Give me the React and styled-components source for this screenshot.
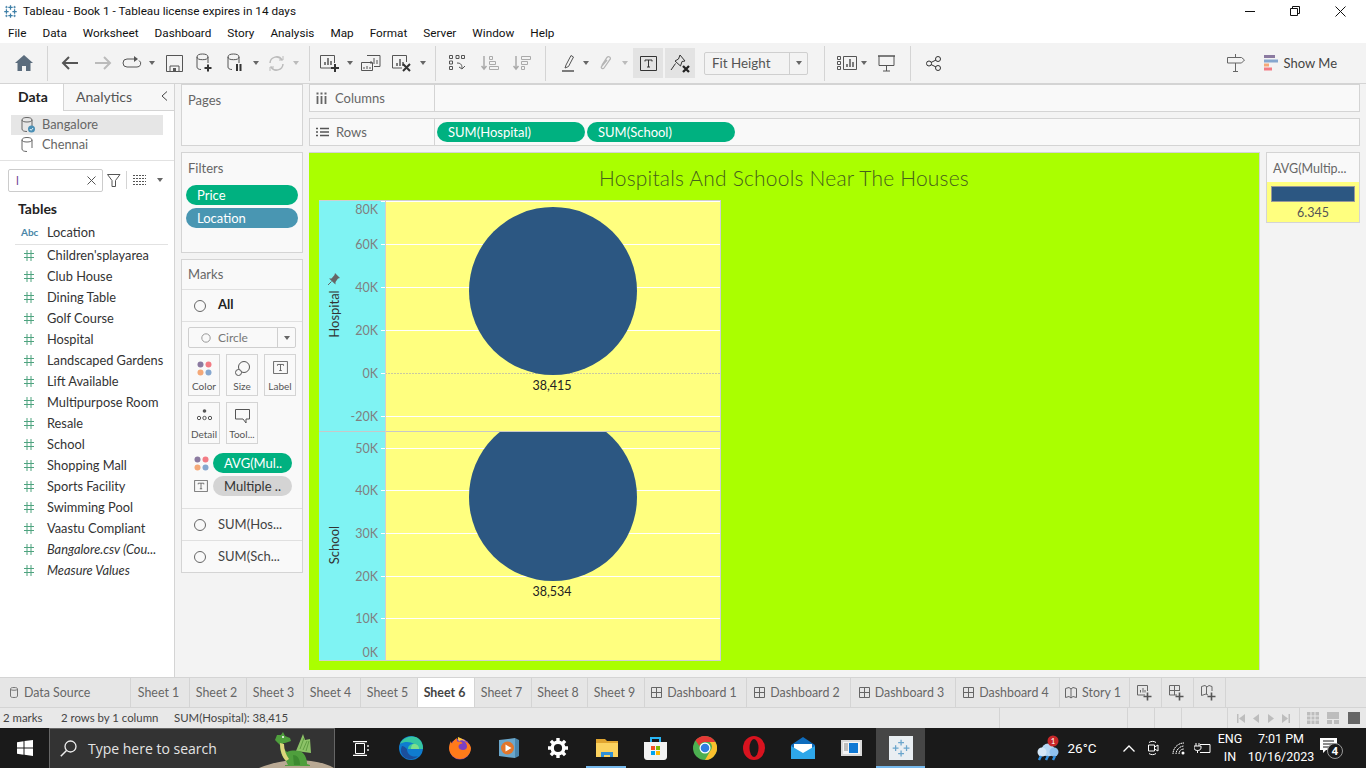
import React from 'react';
import styled, { createGlobalStyle } from 'styled-components';

const UI = 'Roboto, "Open Sans", sans-serif';
const BOOK = 'Lato, "Open Sans", sans-serif';

const GlobalStyle = createGlobalStyle`
  html, body { margin: 0; padding: 0; width: 1366px; height: 768px; overflow: hidden; }
  * { box-sizing: border-box; }
  #root { width: 1366px; height: 768px; }
`;

const Page = styled.div`
  width: 1366px;
  height: 768px;
  display: flex;
  flex-direction: column;
  background: #f3f3f3;
  font-family: ${BOOK};
  color: #333;
`;

/* window chrome */
const TitleBar = styled.div`
  height: 22px;
  background: #fff;
  display: flex;
  align-items: center;
  padding-left: 3px;
  font: 11.75px ${UI};
  color: #111;
`;
const TitleText = styled.span`
  margin-left: 5px;
  flex: 1;
`;
const WinButtons = styled.div`
  display: flex;
  align-items: center;
  height: 22px;
  padding-right: 20px;
  gap: 35px;
`;
const MenuBar = styled.div`
  height: 21px;
  background: #fff;
  display: flex;
  align-items: center;
  padding-left: 8px;
  gap: 16px;
  font: 11.75px ${UI};
  color: #111;
`;
const Toolbar = styled.div`
  height: 41px;
  background: #f3f3f3;
  border-bottom: 1px solid #d4d4d4;
  display: flex;
  align-items: center;
  padding-left: 8px;
`;
const Tool = styled.div`
  width: ${p => p.$w}px;
  margin-left: ${p => p.$ml || 0}px;
  height: 30px;
  flex: none;
  display: flex;
  align-items: center;
  justify-content: center;
  background: ${p => (p.$on ? '#e3e3e3' : 'transparent')};
`;
const ToolDivider = styled.div`
  width: 14px;
  margin-left: ${p => p.$ml || 0}px;
  height: 35px;
  flex: none;
  display: flex;
  justify-content: center;
  &::before { content: ''; width: 1px; background: #d4d4d4; }
`;
const CaretMark = styled.span`
  width: 0;
  height: 0;
  flex: none;
  border-left: 3.5px solid transparent;
  border-right: 3.5px solid transparent;
  border-top: 4px solid ${p => p.$c || '#666'};
`;
const FitSelect = styled.div`
  width: 104px;
  height: 23px;
  margin-left: 9px;
  flex: none;
  border: 1px solid #cfcfcf;
  border-radius: 2px;
  display: flex;
  align-items: center;
  font: 13.4px ${BOOK};
  color: #555;
  padding-left: 7px;
`;
const FitLabel = styled.span`flex: 1; padding-bottom: 1px;`;
const FitArrow = styled.div`
  width: 18px;
  height: 100%;
  border-left: 1px solid #cfcfcf;
  display: flex;
  align-items: center;
  justify-content: center;
`;
const ShowMe = styled.div`
  margin-left: auto;
  margin-right: 29px;
  display: flex;
  align-items: center;
  font: 13px ${BOOK};
  color: #444;
  gap: 6px;
`;
const SignSlot = styled.div`
  margin-right: 13px;
  display: flex;
`;

/* main body */
const Body = styled.div`
  height: 593px;
  display: flex;
`;
const DataPane = styled.div`
  width: 175px;
  flex: none;
  background: #fff;
  border-right: 1px solid #d4d4d4;
  display: flex;
  flex-direction: column;
`;
const PaneTabs = styled.div`
  height: 27px;
  display: flex;
  flex: none;
`;
const PaneTab = styled.div`
  width: ${p => p.$w}px;
  flex: ${p => (p.$grow ? 1 : 'none')};
  display: flex;
  align-items: center;
  font: ${p => (p.$on ? 700 : 400)} 14px ${BOOK};
  color: ${p => (p.$on ? '#222' : '#555')};
  padding: 0 0 2px ${p => p.$pl}px;
  background: ${p => (p.$on ? '#fff' : '#f7f7f7')};
  border-bottom: ${p => (p.$on ? 'none' : '1px solid #d4d4d4')};
  border-right: ${p => (p.$on ? '1px solid #d4d4d4' : 'none')};
`;
const CollapseArrow = styled.span`
  margin-left: auto;
  margin-right: 6px;
  display: flex;
`;
const Sources = styled.div`
  padding: 4px 11px 6px;
  border-bottom: 1px solid #e2e2e2;
  height: 50px;
  flex: none;
`;
const SourceRow = styled.div`
  height: 20px;
  width: 152px;
  display: flex;
  align-items: center;
  gap: 7px;
  padding-left: 10px;
  font: 12.8px ${BOOK};
  color: #666;
  background: ${p => (p.$on ? '#e6e6e6' : 'transparent')};
`;
const SourceName = styled.span`
  margin-top: -3px;
`;
const SearchRow = styled.div`
  display: flex;
  align-items: center;
  margin-top: 8px;
  padding-left: 8px;
  height: 22px;
  flex: none;
`;
const SearchBox = styled.div`
  width: 95px;
  height: 23px;
  flex: none;
  background: #fff;
  border: 1px solid #ccc;
  border-radius: 2px;
  display: flex;
  align-items: center;
  justify-content: space-between;
  padding: 0 6px 0 7px;
  font: 12px ${BOOK};
  color: #72459a;
`;
const FunnelSlot = styled.span`
  display: flex;
  flex: none;
  margin-left: 4px;
`;
const SearchDivider = styled.span`
  width: 1px;
  height: 18px;
  flex: none;
  background: #d4d4d4;
  margin: 0 6px 0 5px;
`;
const ListSlot = styled.span`
  display: flex;
  flex: none;
  margin-right: 11px;
`;
const TablesHead = styled.div`
  margin: 9px 0 0 18px;
  height: 18px;
  line-height: 18px;
  font: 700 14px ${BOOK};
  color: #222;
`;
const FieldRow = styled.div`
  height: 21px;
  margin-top: ${p => p.$mt || 0}px;
  flex: none;
  display: flex;
  align-items: center;
  font: ${p => (p.$italic ? 'italic' : 'normal')} 12.8px ${BOOK};
  color: #333;
  padding: 0 4px 1px 0;
  white-space: nowrap;
`;
const FieldGlyph = styled.span`
  width: 47px;
  padding-left: ${p => p.$pl}px;
  flex: none;
  display: flex;
  font: 700 10px ${BOOK};
  color: #4a86a8;
`;
const FieldDivider = styled.div`
  height: 1px;
  background: #e2e2e2;
  margin: 1px 6px 0 15px;
`;

const SideColumn = styled.div`
  width: 134px;
  flex: none;
  padding-left: 6px;
  display: flex;
  flex-direction: column;
  gap: 6px;
`;
const Card = styled.div`
  width: 122px;
  height: ${p => p.$h}px;
  flex: none;
  background: #f9f9f9;
  border: 1px solid #d4d4d4;
  display: flex;
  flex-direction: column;
`;
const CardTitle = styled.div`
  font: 13px ${BOOK};
  color: #666;
  padding: ${p => p.$pt || 7}px 0 0 6px;
  height: ${p => p.$h || 25}px;
  flex: none;
`;
const Pill = styled.div`
  height: 20px;
  width: ${p => p.$w}px;
  flex: none;
  border-radius: 10px;
  background: ${p => p.$bg || '#00b180'};
  color: ${p => p.$fg || '#fff'};
  font: 13px ${BOOK};
  display: flex;
  align-items: center;
  padding: 0 0 1px 11px;
  white-space: nowrap;
`;
const PillStack = styled.div`
  display: flex;
  flex-direction: column;
  gap: 3px;
  margin: 1px 0 0 4px;
`;
const MarkRow = styled.div`
  height: ${p => p.$h}px;
  flex: none;
  display: flex;
  align-items: center;
  gap: 12px;
  padding-left: 12px;
  font: ${p => (p.$bold ? 700 : 400)} 13px ${BOOK};
  color: ${p => (p.$bold ? '#222' : '#444')};
  border-top: 1px solid #e0e0e0;
`;
const MarkLabel = styled.span`
  margin-top: -${p => p.$up || 2}px;
`;
const Radio = styled.span`
  width: 12px;
  height: 12px;
  border-radius: 50%;
  border: 1.5px solid #666;
  flex: none;
`;
const MarkControls = styled.div`
  flex: none;
  border-top: 1px solid #e0e0e0;
  padding: 5px 6px 0;
  height: 187px;
`;
const MarkSelect = styled.div`
  width: 108px;
  height: 21px;
  border: 1px solid #cfcfcf;
  border-radius: 2px;
  display: flex;
  align-items: center;
  font: 12px ${BOOK};
  color: #777;
  padding-left: 12px;
  gap: 7px;
`;
const MarkArrow = styled.div`
  margin-left: auto;
  width: 18px;
  height: 100%;
  border-left: 1px solid #cfcfcf;
  display: flex;
  align-items: center;
  justify-content: center;
`;
const MarkGrid = styled.div`
  display: grid;
  grid-template-columns: repeat(3, 32px);
  grid-auto-rows: 42px;
  gap: 6px;
  margin-top: 6px;
`;
const MarkButton = styled.div`
  border: 1px solid #d4d4d4;
  display: flex;
  flex-direction: column;
  align-items: center;
  justify-content: space-between;
  font: 10px ${BOOK};
  color: #555;
  padding: 6px 0 3px;
  overflow: hidden;
  white-space: nowrap;
`;
const EncodingRows = styled.div`
  display: flex;
  flex-direction: column;
  gap: 3px;
  margin-top: 9px;
`;
const EncodingRow = styled.div`
  display: flex;
  align-items: center;
`;
const EncodingIcon = styled.span`
  width: 25px;
  padding-left: 6px;
  flex: none;
  display: flex;
`;

const Main = styled.div`
  width: 1051px;
  flex: none;
  display: flex;
  flex-direction: column;
  gap: 6px;
`;
const Shelf = styled.div`
  height: 28px;
  flex: none;
  background: #f9f9f9;
  border: 1px solid #d4d4d4;
  display: flex;
  align-items: center;
`;
const ShelfLabel = styled.div`
  width: 125px;
  height: 100%;
  flex: none;
  border-right: 1px solid #d4d4d4;
  display: flex;
  align-items: center;
  gap: ${p => p.$gap}px;
  padding: 0 0 1px 6px;
  font: 13px ${BOOK};
  color: #666;
`;
const ShelfPills = styled.div`
  display: flex;
  gap: 2px;
  padding-left: 2px;
`;
const VizRow = styled.div`
  display: flex;
  gap: 6px;
  align-items: flex-start;
`;
const Viz = styled.div`
  width: 951px;
  height: 518px;
  background: #aaff00;
  border-top: 1px solid #d4d4d4;
  border-right: 1px solid #d4d4d4;
  padding-left: 10px;
`;
const VizTitle = styled.div`
  height: 47px;
  font: 300 21px ${BOOK};
  letter-spacing: 0.2px;
  color: #46601c;
  display: flex;
  align-items: center;
  justify-content: center;
  padding: 1px 0 0 0;
  margin-left: -10px;
`;
const Legend = styled.div`
  width: 94px;
  height: 71px;
  flex: none;
  background: #f9f9f9;
  border: 1px solid #d4d4d4;
  display: flex;
  flex-direction: column;
`;
const LegendTitle = styled.div`
  height: 29px;
  flex: none;
  font: 12.5px ${BOOK};
  color: #666;
  padding: 2px 0 0 6px;
  display: flex;
  align-items: center;
`;
const LegendBody = styled.div`
  flex: 1;
  background: #ffff7f;
  padding: 4px 4px 0;
  display: flex;
  flex-direction: column;
  align-items: center;
  font: 12.5px ${BOOK};
  color: #555;
`;
const LegendSwatch = styled.div`
  width: 100%;
  height: 16px;
  flex: none;
  background: #2c5782;
  border: 1px solid #999;
  margin-bottom: 3px;
`;

/* sheet tabs and status */
const TabBar = styled.div`
  height: 31px;
  flex: none;
  background: #e6e6e6;
  border-top: 1px solid #d4d4d4;
  border-bottom: 1px solid #d4d4d4;
  display: flex;
`;
const SheetTab = styled.div`
  width: ${p => p.$w}px;
  flex: none;
  display: flex;
  align-items: center;
  justify-content: ${p => (p.$start ? 'flex-start' : 'center')};
  gap: ${p => (p.$start ? 6 : 5)}px;
  padding: 0 ${p => (p.$start ? 0 : 3)}px 0 ${p => (p.$start ? 10 : 0)}px;
  font: ${p => (p.$on ? 700 : 400)} 12.4px ${BOOK};
  color: ${p => (p.$on ? '#444' : '#666')};
  background: ${p => (p.$on ? '#fff' : 'transparent')};
  border-right: 1px solid #d4d4d4;
`;
const StatusBar = styled.div`
  height: 20px;
  flex: none;
  background: #e8e8e8;
  display: flex;
  align-items: center;
  font: 11.4px ${BOOK};
  color: #444;
`;
const StatusText = styled.span`
  width: ${p => p.$w}px;
  flex: none;
  padding: 0 0 1px 3px;
  white-space: nowrap;
`;
const StatusCell = styled.div`
  width: ${p => p.$w}px;
  height: 100%;
  flex: none;
  border-left: 1px solid #d4d4d4;
  display: flex;
  align-items: center;
  justify-content: space-around;
  padding: 0 ${p => p.$pad || 0}px;
`;

/* windows taskbar */
const Taskbar = styled.div`
  height: 40px;
  flex: none;
  background: #1a1a1a;
  display: flex;
  align-items: stretch;
  color: #fff;
  font: 12.5px ${UI};
`;
const StartSlot = styled.div`
  width: 49px;
  flex: none;
  display: flex;
  align-items: center;
  justify-content: center;
`;
const SearchBar = styled.div`
  width: 286px;
  flex: none;
  background: #333;
  border: 1px solid #666;
  border-bottom: none;
  display: flex;
  align-items: center;
  font: 14px "Open Sans", sans-serif;
  color: #e4e4e4;
  padding-left: 10px;
  gap: 11px;
  overflow: hidden;
`;
const DragonWrap = styled.span`
  margin-left: auto;
  height: 39px;
  display: flex;
`;
const AppSlot = styled.div`
  position: relative;
  width: ${p => p.$w}px;
  flex: none;
  display: flex;
  align-items: center;
  justify-content: center;
  background: ${p => (p.$active ? '#464646' : 'transparent')};
  &::after {
    content: '';
    display: ${p => (p.$open || p.$active ? 'block' : 'none')};
    position: absolute;
    bottom: 0;
    height: 2px;
    left: ${p => (p.$active ? 0 : 4)}px;
    right: ${p => (p.$active ? 0 : 5)}px;
    background: #76b9ed;
  }
`;
const Tray = styled.div`
  margin-left: auto;
  display: flex;
  align-items: center;
  padding-right: 21px;
`;
const TrayItem = styled.div`
  width: ${p => p.$w}px;
  margin-left: ${p => p.$ml || 0}px;
  flex: none;
  display: flex;
  align-items: center;
  justify-content: center;
  font-size: ${p => p.$fs || 12}px;
`;
const TrayStack = styled.div`
  width: ${p => p.$w}px;
  margin-left: ${p => p.$ml || 0}px;
  flex: none;
  display: flex;
  flex-direction: column;
  align-items: center;
  line-height: 18px;
  white-space: nowrap;
`;

/* icons */
const Ico = ({ w = 20, h = 20, box, children, ...rest }) => (
  <svg width={w} height={h} viewBox={box || `0 0 ${w} ${h}`} fill="none" {...rest}>{children}</svg>
);
const D = '#555';
const G = '#bbb';

const TableauMark = ({ size = 15, c = '#3d7ea6' }) => (
  <Ico w={size} h={size} box="0 0 24 24">
    <g stroke={c} strokeWidth="2">
      <path d="M12 2v7M8.500 5.500h7M12 15v7M8.500 18.500h7M5.500 8.500v7M2 12h7M18.500 8.500v7M15 12h7" />
      <path d="M5.500 3v4M3.500 5h4M18.500 3v4M16.500 5h4M5.500 17v4M3.500 19h4M18.500 17v4M16.500 19h4" strokeWidth="1.300" />
    </g>
  </Ico>
);
const Minimize = () => <Ico w={10} h={10}><path d="M0 5.500h10" stroke="#111" /></Ico>;
const Restore = () => <Ico w={10} h={10}><path d="M.5 2.500h7v7h-7zM2.500 2.500v-2h7v7h-2" stroke="#111" /></Ico>;
const CloseX = () => <Ico w={11} h={11}><path d="M.5.5l10 10M10.500.5l-10 10" stroke="#111" /></Ico>;

const HomeIcon = () => <Ico w={18} h={16}><path d="M9 0L0 8h2.500v8h4.500v-5h4v5h4.500V8H18z" fill="#5b6c7d" /></Ico>;
const ArrowBack = ({ c = D }) => <Ico w={18} h={14}><path d="M17 7H2M8 1L2 7l6 6" stroke={c} strokeWidth="2" /></Ico>;
const ArrowFwd = ({ c = G }) => <Ico w={18} h={14}><path d="M1 7h15M10 1l6 6-6 6" stroke={c} strokeWidth="2" /></Ico>;
const RedoLoop = () => <Ico w={20} h={14}><path d="M13 3H5a3.500 3.500 0 000 8h10a3.500 3.500 0 002-6.500" stroke={D} /><path d="M12 0l4 3-4 3z" fill={D} /></Ico>;
const SaveIcon = () => <Ico w={17} h={17}><path d="M.5.5h16v16H.5z" stroke={D} /><path d="M4 16v-5h9v5" stroke={D} /><path d="M7 13h3v3H7z" fill={D} /></Ico>;
const Cyl = ({ extra }) => (
  <Ico w={20} h={20}>
    <path d="M2 4c0-2 2-3 5.500-3S13 2 13 4v6M2 4v10c0 1.500 1.500 2.500 4 2.500M2 4c0 1.800 2 2.700 5.500 2.700S13 5.800 13 4" stroke={D} />
    {extra}
  </Ico>
);
const PlusMark = ({ x = 13, y = 14, s = 3.500, c = '#333', w = 2 }) => (
  <path d={`M${x - s} ${y}h${2 * s}M${x} ${y - s}v${2 * s}`} stroke={c} strokeWidth={w} />
);
const SheetBars = ({ c = D }) => (
  <path d="M5 12V9M8 12V5M11 12V8" stroke={c} strokeWidth="1.500" />
);
const NewSheet = () => (
  <Ico w={21} h={20}><path d="M12 15H.5V2.500h14V10" stroke={D} /><SheetBars /><PlusMark x={15} y={15} s={4} /></Ico>
);
const DupSheet = () => (
  <Ico w={20} h={17}>
    <path d="M6 .5h13v11h-6M.5 7.500h11v8H.5z" stroke={D} fill="#f3f3f3" />
    <path d="M10 9V6M13 9V3M16 9V5" stroke={D} />
    <path d="M3 14v-2M6 14v-3M9 14v-2" stroke={D} />
  </Ico>
);
const ClearSheet = () => (
  <Ico w={20} h={19}><path d="M10 14H.5V1.500h14V8" stroke={D} /><SheetBars /><path d="M11 10l7 7M18 10l-7 7" stroke="#333" strokeWidth="2" /></Ico>
);
const SwapIcon = () => (
  <Ico w={20} h={18}>
    <g stroke={D}><path d="M1.500 1.500h3v3h-3zM1.500 7h3v3h-3zM1.500 12.500h3v3h-3zM8 1.500h3v3H8zM13.500 1.500h3v3h-3z" /></g>
    <path d="M9 9c3 0 5 1 5 5M11 13l3 2 3-3" stroke={D} />
  </Ico>
);
const SortAsc = () => (
  <Ico w={18} h={16}>
    <path d="M3 1v13M.5 11L3 14l2.500-3" stroke="#aaa" strokeWidth="1.500" />
    <path d="M8.500 1.500h3v3h-3zM8.500 6.500h6v3h-6zM8.500 11.500h9v3h-9z" stroke="#aaa" />
  </Ico>
);
const SortDesc = () => (
  <Ico w={18} h={16}>
    <path d="M3 1v13M.5 11L3 14l2.500-3" stroke="#aaa" strokeWidth="1.500" />
    <path d="M8.500 1.500h9v3h-9zM8.500 6.500h6v3h-6zM8.500 11.500h3v3h-3z" stroke="#aaa" />
  </Ico>
);
const Marker = () => (
  <Ico w={13} h={18}>
    <path d="M4 11L9 1.500l2.500 1.500L6.500 12.500 3 14z" stroke={D} fill="none" />
    <path d="M0 17h12" stroke={D} strokeWidth="1.500" />
  </Ico>
);
const Clip = () => (
  <Ico w={13} h={16}>
    <path d="M3 10l5-7.500c1.500-2 4.500 0 3 2L5 13c-1 1.500-3.500 0-2.500-1.500L8 5" stroke="#b5b5b5" strokeWidth="1.300" fill="none" />
  </Ico>
);
const BoxT = ({ w = 17, h = 15, c = '#333' }) => (
  <Ico w={w} h={h} box="0 0 17 15"><path d="M.5.5h16v14H.5z" stroke={c} /><path d="M5 4h7M8.500 4v7M7 11h3M5 4v1.500M12 4v1.500" stroke={c} /></Ico>
);
const PinClear = () => (
  <Ico w={22} h={22}>
    <path d="M11 3l5 6-3 .5-1.500 4.500-5.500-5 3.500-2zM6.500 11.500L2 18" stroke="#333" fill="none" />
    <path d="M14 14l6 6M20 14l-6 6" stroke="#222" strokeWidth="2.300" />
  </Ico>
);
const ShowHide = () => (
  <Ico w={20} h={15}>
    <path d="M.5.500h3v3h-3zM.5 5.500h3v3h-3zM.5 10.500h3v3h-3zM6.500.5h13v13h-13z" stroke={D} />
    <path d="M10 11V8M13 11V3M16 11V6" stroke={D} strokeWidth="1.500" />
  </Ico>
);
const Present = () => (
  <Ico w={17} h={17}>
    <path d="M0 1h17" stroke={D} strokeWidth="1.500" /><path d="M1 1v9.500h15V1M8.500 10.500V16M5 16h7" stroke={D} />
  </Ico>
);
const Share = () => (
  <Ico w={15} h={15}>
    <circle cx="12" cy="3" r="2.500" stroke="#333" /><circle cx="12" cy="12" r="2.500" stroke="#333" /><circle cx="3" cy="7.500" r="2.500" stroke="#333" />
    <path d="M5 6.500l5-2.500M5 8.500l5 2.500" stroke="#333" />
  </Ico>
);
const SignPost = () => (
  <Ico w={18} h={18}>
    <path d="M.5 3.500h14L17.500 6l-3 3H.5zM8.500 0v3.500M8.500 9v8M6 17.500h5" stroke="#666" />
  </Ico>
);
const ShowMeBars = () => (
  <Ico w={14} h={16}>
    <path d="M0 0h11v3H0z" fill="#8b7aa0" /><path d="M0 4.500h14v3H0z" fill="#86a7cf" />
    <path d="M0 8.500h5v3H0z" fill="#f4a878" /><path d="M0 12.500h8v3H0z" fill="#f37b84" />
  </Ico>
);

const DbIcon = ({ check, c = '#666' }) => (
  <Ico w={14} h={16}>
    <path d="M1 3c0-1.500 1.700-2.500 5-2.500S11 1.500 11 3v8M1 3v9c0 1.500 1.700 2.500 5 2.500M1 3c0 1.300 2 2 5 2s5-.7 5-2" stroke={c} />
    {check && <circle cx="10.500" cy="12" r="3.500" fill="#4a8fb5" />}
    {check && <path d="M8.800 12l1.300 1.300 2-2.300" stroke="#fff" strokeWidth=".9" />}
  </Ico>
);
const TabDb = () => (
  <Ico w={8} h={11}><path d="M.5 2C.5 1 1.500.5 4 .5S7.500 1 7.500 2v7c0 1-1 1.500-3.500 1.500S.5 10 .5 9zM.5 2.500c1 1 6 1 7 0" stroke="#777" /></Ico>
);
const Chevron = () => <Ico w={7} h={10}><path d="M6 .5L1 5l5 4.500" stroke="#444" /></Ico>;
const SmallX = () => <Ico w={9} h={9}><path d="M.5.5l8 8M8.500.5l-8 8" stroke="#555" /></Ico>;
const Funnel = () => <Ico w={14} h={13}><path d="M.5.500h12.500L8.500 6.500v6L5 12.500v-6z" stroke="#555" /></Ico>;
const ListView = () => <Ico w={13} h={10}><path d="M0 .5h13M0 3.500h13M0 6.500h13M0 9.500h13" stroke="#555" strokeDasharray="2 1" /></Ico>;
const Hash = () => <Ico w={10} h={11}><path d="M3 0v11M7 0v11M0 3.500h10M0 7.500h10" stroke="#4ea37f" /></Ico>;
const ColumnsMark = () => <Ico w={11} h={12}><path d="M1.500 4v8M5.500 4v8M9.500 4v8" stroke="#666" strokeWidth="1.800" /><path d="M.5 1.500h2M4.500 1.500h2M8.500 1.500h2" stroke="#666" strokeWidth="1.800" /></Ico>;
const RowsMark = () => <Ico w={13} h={10}><path d="M4 1.500h9M4 5h9M4 8.500h9M0 1.500h2M0 5h2M0 8.500h2" stroke="#555" strokeWidth="1.500" /></Ico>;
const FourDots = ({ s = 15 }) => (
  <Ico w={s} h={s} box="0 0 15 15">
    <circle cx="3.500" cy="3.500" r="3" fill="#8b7aa0" /><circle cx="11.500" cy="3.500" r="3" fill="#f37b84" />
    <circle cx="3.500" cy="11.500" r="3" fill="#f4a878" /><circle cx="11.500" cy="11.500" r="3" fill="#86a7cf" />
  </Ico>
);
const SizeMark = () => <Ico w={15} h={15}><circle cx="9" cy="6" r="5.500" stroke="#555" /><circle cx="3.500" cy="11.500" r="3" stroke="#555" fill="#f9f9f9" /></Ico>;
const DetailMark = () => (
  <Ico w={15} h={12}><circle cx="7.500" cy="2" r="1.800" fill="#555" /><circle cx="2" cy="9" r="1.700" stroke="#555" /><circle cx="7.500" cy="9" r="1.700" stroke="#555" /><circle cx="13" cy="9" r="1.700" stroke="#555" /></Ico>
);
const TipMark = () => <Ico w={15} h={15}><path d="M.5.5h14v9.500h-3.500V14l-3-4H.5z" stroke="#555" /></Ico>;
const DashGrid = () => <Ico w={11} h={11}><path d="M.5.5h10v10H.5zM.5 5.500h10M5.500.5v10" stroke="#666" /></Ico>;
const StoryBook = ({ c = '#666' }) => <Ico w={12} h={12}><path d="M.5 1.500L4 .5l2 1.500 2-1.500 3.500 1v9L8 9.500 6 11l-2-1.500-3.500 1zM6 2v9" stroke={c} /></Ico>;
const AddTab = ({ kind }) => (
  <Ico w={15} h={16}>
    {kind === 'sheet' && <path d="M8 10H.5V.5h10V6M3.500 7.500V5M6 7.500V3M8 7.500V5" stroke="#666" />}
    {kind === 'dash' && <path d="M8 10H.5V.5h10V6M.5 5.500h10M5.500.5V10" stroke="#666" />}
    {kind === 'story' && <path d="M7 10L5 9 .5 10.500v-9L4 .5l2 1.500 2-1.500 3 1V6M5.500 2v7" stroke="#666" />}
    <PlusMark x={10.500} y={11.500} s={4} c="#555" w={1.600} />
  </Ico>
);
const NavGlyph = ({ d }) => <Ico w={8} h={9}><path d={d} fill="#bdbdbd" /></Ico>;

/* taskbar art */
const WinLogo = () => <Ico w={16} h={16}><path d="M0 2.200L6.500 1.300v6.300H0zM7.500 1.100L16 0v7.600H7.500zM0 8.500h6.500v6.300L0 13.800zM7.500 8.500H16V16l-8.500-1.200z" fill="#fff" /></Ico>;
const SearchGlass = () => <Ico w={17} h={17}><circle cx="10.500" cy="6.500" r="5.500" stroke="#eee" strokeWidth="1.300" /><path d="M6.500 10.500L.8 16.200" stroke="#eee" strokeWidth="1.500" /></Ico>;
const Dragon = () => (
  <Ico w={75} h={39}>
    <path d="M0 39C15 33 28 31 38 31c12 0 27 2 37 8z" fill="#b9a994" />
    <path d="M37 22L44 5l2 6 5-1 1 14z" fill="#8cc267" />
    <path d="M41 20l4-11M44 21l4-9M47 22l3-10" stroke="#5f9c42" />
    <path d="M18 6h4l2-3 2 4 5 2 1 3-6 2h-2c0 4 1 7 4 9 5-2 12-2 16 1 3 3 4 7 4 11l3 1v1H26v-1h3l-2-4c-4-4-6-10-6-16l-2-2-3-3z" fill="#4f9f3d" />
    <path d="M21 14c0 7 2 14 6 18l3-2c-3-4-5-9-5-15z" fill="#dcd67c" />
    <path d="M34 26c4 0 7 3 7 10h-6z" fill="#3d8a30" />
    <circle cx="24" cy="8" r="1" fill="#fff" />
  </Ico>
);
const TaskView = () => <Ico w={16} h={15}><path d="M2.500 2.500h9v10h-9z" stroke="#fff" /><path d="M0 .5h14M0 14.500h14M15 4v2M15 8v2" stroke="#fff" strokeWidth="1.300" /></Ico>;
const Edge = () => (
  <Ico w={24} h={24}>
    <circle cx="12" cy="12" r="12" fill="#0f7ccf" />
    <path d="M1 8C4 1 14-2 20 3c3 2.500 4 6 4 10H9c0-3 2-5 6-5-3-2-9-3-14 0z" fill="#37c6a0" />
    <path d="M8 13c0 6 6 9 11 7-4 4-10 4-14 1-3-3-4-7-2-11 1.500 0 3 1 5 3z" fill="#1b4f9c" />
    <path d="M15 8c3 0 5 1.500 5 5h-8c0-3 1-5 3-5z" fill="#7fe08a" />
  </Ico>
);
const Firefox = () => (
  <Ico w={24} h={24}>
    <circle cx="12" cy="13" r="10.500" fill="#7a3fc4" />
    <path d="M23 12c0 6-5 11-11 11S1 18 1 12c0-3 1-5 2-7 0 1 .5 2 1 2.500C5 5 7 3 9 2c-.5 2 0 3 1 4 2-1 4 0 4.500 1.500-2 0-4 1-4 3 0 2 2 3.500 4.500 3.500 2.500 0 4-1.500 4-3.500 0-2-1-4-2.500-5 3 .5 6 3 6.500 6.500z" fill="#ff7a1a" />
    <path d="M10 1c2 1 6 2 8 5-3-2-5-2-7-1-1-1-1.500-2.500-1-4z" fill="#ffc53d" />
  </Ico>
);
const Media = () => (
  <Ico w={20} h={20}>
    <path d="M0 2l16-2v20L0 18z" fill="#6aa7cc" /><path d="M16 0l4 2v16l-4 2z" fill="#4a86ad" />
    <circle cx="8.500" cy="10" r="6.500" fill="#e2762b" /><path d="M6.500 6.500l6 3.500-6 3.500z" fill="#fff" />
  </Ico>
);
const Gear = () => (
  <Ico w={20} h={20}>
    <circle cx="10" cy="10" r="5.800" stroke="#fff" strokeWidth="3.400" />
    <path d="M10 0v4M10 16v4M0 10h4M16 10h4M2.900 2.900l2.800 2.800M14.300 14.300l2.800 2.800M17.100 2.900l-2.800 2.800M5.700 14.300l-2.800 2.800" stroke="#fff" strokeWidth="3.400" />
  </Ico>
);
const Explorer = () => (
  <Ico w={22} h={18}>
    <path d="M0 0h9l2 2h11v4H0z" fill="#e0a530" /><path d="M0 4h22v14H0z" fill="#fbd25f" />
    <path d="M5 18v-5h12v5h-3v-2H8v2z" fill="#2f8fd6" />
  </Ico>
);
const Store = () => (
  <Ico w={23} h={24}>
    <path d="M7 6V2h9v4" stroke="#29b6f6" strokeWidth="2" />
    <path d="M0 6h23v15c0 1.500-1 3-3 3H3c-2 0-3-1.500-3-3z" fill="#f2f2f2" />
    <path d="M7 10h4v4H7z" fill="#f25022" /><path d="M12 10h4v4h-4z" fill="#7fba00" />
    <path d="M7 15h4v4H7z" fill="#00a4ef" /><path d="M12 15h4v4h-4z" fill="#ffb900" />
  </Ico>
);
const Chrome = () => (
  <Ico w={24} h={24}>
    <circle cx="12" cy="12" r="12" fill="#4caf50" />
    <path d="M12 0a12 12 0 0110.400 6H12a6 6 0 00-5.700 4L2.500 4.300A12 12 0 0112 0z" fill="#e53935" />
    <path d="M22.400 6A12 12 0 0112 24l5.200-9a6 6 0 00-.6-9z" fill="#fbc02d" />
    <circle cx="12" cy="12" r="5.500" fill="#fff" /><circle cx="12" cy="12" r="4.300" fill="#2f7de1" />
  </Ico>
);
const Opera = () => (
  <Ico w={22} h={24}>
    <ellipse cx="11" cy="12" rx="11" ry="12" fill="#d8131f" />
    <ellipse cx="11" cy="12" rx="4.500" ry="9" fill="#1a1a1a" />
  </Ico>
);
const Mail = () => (
  <Ico w={24} h={22}>
    <path d="M12 0l12 8v14H0V8z" fill="#0f6cbd" /><path d="M3 7h18v9H3z" fill="#fff" />
    <path d="M0 9l12 7 12-7v13H0z" fill="#2ea7ea" />
  </Ico>
);
const NewsApp = () => (
  <Ico w={21} h={16}>
    <path d="M0 0h21v16H0z" fill="#d9d9d9" /><path d="M2 2h17v12H2z" fill="#f5f5f5" />
    <path d="M8 3h9v10H8z" fill="#0f78d4" />
    <path d="M3 4h4M3 6h4M3 8h4M3 10h4" stroke="#888" />
  </Ico>
);
const TableauApp = () => (
  <Ico w={24} h={24}>
    <path d="M0 0h24v24H0z" fill="#e9eef2" />
    <g transform="translate(2 2) scale(.84)">
      <g stroke="#6aa5cc" strokeWidth="1.500">
        <path d="M12 2v7M8.500 5.500h7M12 15v7M8.500 18.500h7M5.500 8.500v7M2 12h7M18.500 8.500v7M15 12h7" />
      </g>
    </g>
  </Ico>
);
const WeatherIcon = () => (
  <Ico w={24} h={26}>
    <circle cx="12" cy="15" r="6.500" fill="#b6d7f4" /><circle cx="6" cy="17" r="4.500" fill="#d6e8f8" /><circle cx="18" cy="17" r="4.500" fill="#8fc1ee" />
    <path d="M5 21l-2 4M12 21l-2 4M19 21l-2 4" stroke="#2f8fe0" strokeWidth="2.500" />
    <circle cx="17" cy="6" r="5.500" fill="#c8282a" />
    <text x="17" y="9" textAnchor="middle" fontSize="8" fill="#fff" fontFamily="Lato, sans-serif">1</text>
  </Ico>
);
const UpChevron = () => <Ico w={12} h={7}><path d="M.5 6.500L6 1l5.500 5.500" stroke="#fff" strokeWidth="1.300" /></Ico>;
const CamTray = () => (
  <Ico w={12} h={16}>
    <path d="M1.500 5h6v6h-6zM7.500 7L11 5v6L7.500 9z" stroke="#fff" />
    <path d="M2 2.500c2-1.500 5-1.500 7 0M2 13.500c2 1.500 5 1.500 7 0" stroke="#fff" />
  </Ico>
);
const Wifi = () => (
  <Ico w={13} h={13}>
    <path d="M1 12c0-6 5-11 11-11M4 12c0-4 4-8 8-8M7 12c0-3 2-5 5-5" stroke="#fff" strokeDasharray="1.500 .5" /><circle cx="11" cy="11" r="1.500" fill="#fff" />
  </Ico>
);
const Battery = () => (
  <Ico w={17} h={12}>
    <path d="M6 2.500h10v8H6" stroke="#fff" /><path d="M2 1v3M5 1v3M0 4h7v2c0 1.500-1.500 2.500-3.500 2.500S0 7.500 0 6z" stroke="#fff" fill="#1a1a1a" /><path d="M3.500 8.500V11" stroke="#fff" />
  </Ico>
);
const NoteIcon = () => (
  <Ico w={24} h={24}>
    <path d="M0 2h17v12H6l-3 3v-3H0z" fill="#fff" />
    <path d="M3 5h11M3 8h11M3 11h7" stroke="#1a1a1a" />
    <circle cx="15" cy="15" r="7.500" fill="#1a1a1a" stroke="#999" />
    <text x="15" y="19" textAnchor="middle" fontSize="11" fontWeight="700" fill="#fff" fontFamily='"Open Sans", sans-serif'>4</text>
  </Ico>
);

/* the chart */
const AXIS_FONT = 'Lato, sans-serif';
const ticks = [
  ['80K', 1, 9], ['60K', 44, 44], ['40K', 87, 87], ['20K', 130, 130], ['0K', 173, 173], ['-20K', 216, 216],
  ['50K', 248, 248], ['40K', 290, 290], ['30K', 333.5, 333.5], ['20K', 376, 376], ['10K', 418, 418], ['0K', null, 452],
];

const Chart = () => (
  <svg width={402} height={461} style={{ display: 'block' }}>
    <defs>
      <clipPath id="lowerPane"><rect x="66" y="232" width="336" height="229" /></clipPath>
    </defs>
    <rect x="0" y="0" width="66" height="461" fill="#7ff3f3" />
    <rect x="66" y="0" width="336" height="461" fill="#ffff7f" />
    {ticks.map(([label, line, y]) => (
      <g key={label + y}>
        {line !== null && (
          label === '0K'
            ? <g>
                <path d={`M62 ${line + 0.5}H66`} stroke="#fff" />
                <path d={`M66 ${line + 0.5}H401`} stroke="#c9c9a0" strokeDasharray="2 1" />
              </g>
            : <path d={`M62 ${Math.floor(line) + 0.5}H401`} stroke="#fff" />
        )}
        <text x="59" y={y + 4.500} textAnchor="end" fontFamily={AXIS_FONT} fontSize="12.500" fill="#808080">{label}</text>
      </g>
    ))}
    <circle cx="234" cy="91" r="84" fill="#2c5782" />
    <circle cx="234" cy="297" r="84" fill="#2c5782" clipPath="url(#lowerPane)" />
    <path d="M0 231.500H402" stroke="#c8c8c8" />
    <path d="M66.500 0V461M401.500 0V461M0 .5H402M0 460.500H402" stroke="#d0d0d0" />
    <text x="233" y="189.500" textAnchor="middle" fontFamily={AXIS_FONT} fontSize="12.500" fill="#222">38,415</text>
    <text x="233" y="395.500" textAnchor="middle" fontFamily={AXIS_FONT} fontSize="12.500" fill="#222">38,534</text>
    <text transform="translate(20 114) rotate(-90)" textAnchor="middle" fontFamily={AXIS_FONT} fontSize="13" fill="#333">Hospital</text>
    <text transform="translate(20 345) rotate(-90)" textAnchor="middle" fontFamily={AXIS_FONT} fontSize="13" fill="#333">School</text>
    <path d="M16 73l5 5-2 .5-2.500 3.500v2.500l-6.500-6h2.500l3-3.500z" fill="#666" />
    <path d="M12.500 81.500L9 85" stroke="#666" />
  </svg>
);

const fields = [
  "Children'splayarea", 'Club House', 'Dining Table', 'Golf Course', 'Hospital', 'Landscaped Gardens',
  'Lift Available', 'Multipurpose Room', 'Resale', 'School', 'Shopping Mall', 'Sports Facility',
  'Swimming Pool', 'Vaastu Compliant',
];
const sheetTabs = [[59, 'Sheet 1'], [57, 'Sheet 2'], [57, 'Sheet 3'], [57, 'Sheet 4'], [57, 'Sheet 5'], [57, 'Sheet 6', true], [57, 'Sheet 7'], [56, 'Sheet 8'], [57, 'Sheet 9']];
const dashTabs = [[102, 'Dashboard 1'], [104, 'Dashboard 2'], [105, 'Dashboard 3'], [104, 'Dashboard 4']];
const taskApps = [
  [<TaskView key="t" />, 51], [<Edge key="e" />, 49], [<Firefox key="f" />, 49], [<Media key="m" />, 49], [<Gear key="g" />, 49],
  [<Explorer key="x" />, 49, 'open'], [<Store key="s" />, 49], [<Chrome key="c" />, 49], [<Opera key="o" />, 49], [<Mail key="l" />, 49],
  [<NewsApp key="n" />, 49], [<TableauApp key="a" />, 49, 'active'],
];

export default function App() {
  return (
    <Page>
      <GlobalStyle />
      <TitleBar>
        <TableauMark />
        <TitleText>Tableau - Book 1 - Tableau license expires in 14 days</TitleText>
        <WinButtons><Minimize /><Restore /><CloseX /></WinButtons>
      </TitleBar>
      <MenuBar>
        {['File', 'Data', 'Worksheet', 'Dashboard', 'Story', 'Analysis', 'Map', 'Format', 'Server', 'Window', 'Help'].map(m => <span key={m}>{m}</span>)}
      </MenuBar>
      <Toolbar>
        <Tool $w={32}><HomeIcon /></Tool>
        <ToolDivider />
        <Tool $w={32}><ArrowBack /></Tool>
        <Tool $w={34}><ArrowFwd /></Tool>
        <Tool $w={24}><RedoLoop /></Tool>
        <Tool $w={16}><CaretMark /></Tool>
        <Tool $w={28}><SaveIcon /></Tool>
        <Tool $w={34}><Cyl extra={<PlusMark x={13} y={15} />} /></Tool>
        <Tool $w={28}><Cyl extra={<path d="M11 11v7M14.500 11v7" stroke="#333" strokeWidth="2" />} /></Tool>
        <Tool $w={12}><CaretMark /></Tool>
        <Tool $w={28}><Ico w={17} h={17}><path d="M2 8a6.500 6.500 0 0112-3M15 9a6.500 6.500 0 01-12 3" stroke={G} strokeWidth="1.500" /><path d="M11 5h4V1M6 12H2v4" stroke={G} /></Ico></Tool>
        <Tool $w={12}><CaretMark $c={G} /></Tool>
        <ToolDivider />
        <Tool $w={28}><NewSheet /></Tool>
        <Tool $w={12}><CaretMark /></Tool>
        <Tool $w={30}><DupSheet /></Tool>
        <Tool $w={32}><ClearSheet /></Tool>
        <Tool $w={10}><CaretMark /></Tool>
        <ToolDivider />
        <Tool $w={32}><SwapIcon /></Tool>
        <Tool $w={32}><SortAsc /></Tool>
        <Tool $w={32}><SortDesc /></Tool>
        <ToolDivider />
        <Tool $w={32}><Marker /></Tool>
        <Tool $w={4}><CaretMark /></Tool>
        <Tool $w={34}><Clip /></Tool>
        <Tool $w={6}><CaretMark $c={G} /></Tool>
        <Tool $w={30} $ml={5} $on><BoxT /></Tool>
        <Tool $w={30} $ml={2} $on><PinClear /></Tool>
        <FitSelect><FitLabel>Fit Height</FitLabel><FitArrow><CaretMark /></FitArrow></FitSelect>
        <ToolDivider $ml={9} />
        <Tool $w={20} $ml={6}><ShowHide /></Tool>
        <Tool $w={14}><CaretMark /></Tool>
        <Tool $w={30}><Present /></Tool>
        <ToolDivider $ml={2} />
        <Tool $w={32}><Share /></Tool>
        <ShowMe>
          <SignSlot><SignPost /></SignSlot>
          <ShowMeBars />
          <span>Show Me</span>
        </ShowMe>
      </Toolbar>
      <Body>
        <DataPane>
          <PaneTabs>
            <PaneTab $w={64} $pl={18} $on>Data</PaneTab>
            <PaneTab $grow $pl={12}>Analytics<CollapseArrow><Chevron /></CollapseArrow></PaneTab>
          </PaneTabs>
          <Sources>
            <SourceRow $on><DbIcon check /><SourceName>Bangalore</SourceName></SourceRow>
            <SourceRow><DbIcon /><SourceName>Chennai</SourceName></SourceRow>
          </Sources>
          <SearchRow>
            <SearchBox><span>l</span><SmallX /></SearchBox>
            <FunnelSlot><Funnel /></FunnelSlot>
            <SearchDivider />
            <ListSlot><ListView /></ListSlot>
            <CaretMark />
          </SearchRow>
          <TablesHead>Tables</TablesHead>
          <FieldRow $mt={4}><FieldGlyph $pl={21}>Abc</FieldGlyph>Location</FieldRow>
          <FieldDivider />
          {fields.map(f => <FieldRow key={f}><FieldGlyph $pl={24}><Hash /></FieldGlyph>{f}</FieldRow>)}
          <FieldRow $italic><FieldGlyph $pl={24}><Hash /></FieldGlyph>Bangalore.csv (Cou...</FieldRow>
          <FieldRow $italic><FieldGlyph $pl={24}><Hash /></FieldGlyph>Measure Values</FieldRow>
        </DataPane>
        <SideColumn>
          <Card $h={62}><CardTitle>Pages</CardTitle></Card>
          <Card $h={101}>
            <CardTitle $h={31}>Filters</CardTitle>
            <PillStack>
              <Pill $w={112}>Price</Pill>
              <Pill $w={112} $bg="#4996b2">Location</Pill>
            </PillStack>
          </Card>
          <Card $h={314}>
            <CardTitle $h={29} $pt={6}>Marks</CardTitle>
            <MarkRow $h={32} $bold><Radio /><MarkLabel $up={4}>All</MarkLabel></MarkRow>
            <MarkControls>
              <MarkSelect>
                <Ico w={10} h={10}><circle cx="5" cy="5" r="4.200" stroke="#999" /></Ico>
                Circle
                <MarkArrow><CaretMark /></MarkArrow>
              </MarkSelect>
              <MarkGrid>
                <MarkButton><FourDots />Color</MarkButton>
                <MarkButton><SizeMark />Size</MarkButton>
                <MarkButton><BoxT w={15} h={13} c="#555" />Label</MarkButton>
                <MarkButton><DetailMark />Detail</MarkButton>
                <MarkButton><TipMark />Tool...</MarkButton>
              </MarkGrid>
              <EncodingRows>
                <EncodingRow><EncodingIcon><FourDots /></EncodingIcon><Pill $w={79}>AVG(Mul..</Pill></EncodingRow>
                <EncodingRow><EncodingIcon><BoxT w={14} h={12} c="#555" /></EncodingIcon><Pill $w={79} $bg="#d4d4d4" $fg="#333">Multiple ..</Pill></EncodingRow>
              </EncodingRows>
            </MarkControls>
            <MarkRow $h={32}><Radio /><MarkLabel>SUM(Hos...</MarkLabel></MarkRow>
            <MarkRow $h={32}><Radio /><MarkLabel>SUM(Sch...</MarkLabel></MarkRow>
          </Card>
        </SideColumn>
        <Main>
          <Shelf><ShelfLabel $gap={8}><ColumnsMark />Columns</ShelfLabel></Shelf>
          <Shelf>
            <ShelfLabel $gap={7}><RowsMark />Rows</ShelfLabel>
            <ShelfPills>
              <Pill $w={148}>SUM(Hospital)</Pill>
              <Pill $w={148}>SUM(School)</Pill>
            </ShelfPills>
          </Shelf>
          <VizRow>
            <Viz>
              <VizTitle>Hospitals And Schools Near The Houses</VizTitle>
              <Chart />
            </Viz>
            <Legend>
              <LegendTitle>AVG(Multip...</LegendTitle>
              <LegendBody><LegendSwatch />6.345</LegendBody>
            </Legend>
          </VizRow>
        </Main>
      </Body>
      <TabBar>
        <SheetTab $w={131} $start><TabDb />Data Source</SheetTab>
        {sheetTabs.map(([w, t, on]) => <SheetTab key={t} $w={w} $on={on}>{t}</SheetTab>)}
        {dashTabs.map(([w, t]) => <SheetTab key={t} $w={w}><DashGrid />{t}</SheetTab>)}
        <SheetTab $w={70}><StoryBook />Story 1</SheetTab>
        <SheetTab $w={32}><AddTab kind="sheet" /></SheetTab>
        <SheetTab $w={32}><AddTab kind="dash" /></SheetTab>
        <SheetTab $w={32}><AddTab kind="story" /></SheetTab>
      </TabBar>
      <StatusBar>
        <StatusText $w={58}>2 marks</StatusText>
        <StatusText $w={113}>2 rows by 1 column</StatusText>
        <StatusText $w={828}>SUM(Hospital): 38,415</StatusText>
        <StatusCell $w={128} />
        <StatusCell $w={27} />
        <StatusCell $w={27} />
        <StatusCell $w={46} />
        <StatusCell $w={72} $pad={6}>
          <NavGlyph d="M0 0h1.500v9H0zM8 0v9L2 4.500z" />
          <NavGlyph d="M7 0v9L1 4.500z" />
          <NavGlyph d="M1 0v9l6-4.500z" />
          <NavGlyph d="M0 0v9l6-4.500zM6.500 0H8v9H6.500z" />
        </StatusCell>
        <StatusCell $w={68} $pad={3}>
          <Ico w={12} h={12}><path d="M0 0h12v12H0z" fill="#bdbdbd" /><path d="M4 0v12M8 0v12M0 4h12M0 8h12" stroke="#e8e8e8" /></Ico>
          <Ico w={12} h={12}><path d="M0 0h12v7H0zM0 8h5v4H0zM7 8h5v4H7z" fill="#bdbdbd" /></Ico>
          <Ico w={12} h={12}><path d="M0 0h12v12H0z" fill="#666" /></Ico>
        </StatusCell>
      </StatusBar>
      <Taskbar>
        <StartSlot><WinLogo /></StartSlot>
        <SearchBar>
          <SearchGlass />
          <span>Type here to search</span>
          <DragonWrap><Dragon /></DragonWrap>
        </SearchBar>
        {taskApps.map(([icon, w, state], i) => (
          <AppSlot key={i} $w={w} $open={state === 'open'} $active={state === 'active'}>{icon}</AppSlot>
        ))}
        <Tray>
          <WeatherIcon />
          <TrayItem $w={30} $ml={7} $fs={13.5}>26°C</TrayItem>
          <TrayItem $w={14} $ml={25}><UpChevron /></TrayItem>
          <TrayItem $w={14} $ml={10}><CamTray /></TrayItem>
          <TrayItem $w={14} $ml={11}><Wifi /></TrayItem>
          <TrayItem $w={18} $ml={8}><Battery /></TrayItem>
          <TrayStack $w={30} $ml={4}><span>ENG</span><span>IN</span></TrayStack>
          <TrayStack $w={64} $ml={4}><span>7:01 PM</span><span>10/16/2023</span></TrayStack>
          <TrayItem $w={26} $ml={6}><NoteIcon /></TrayItem>
        </Tray>
      </Taskbar>
    </Page>
  );
}
